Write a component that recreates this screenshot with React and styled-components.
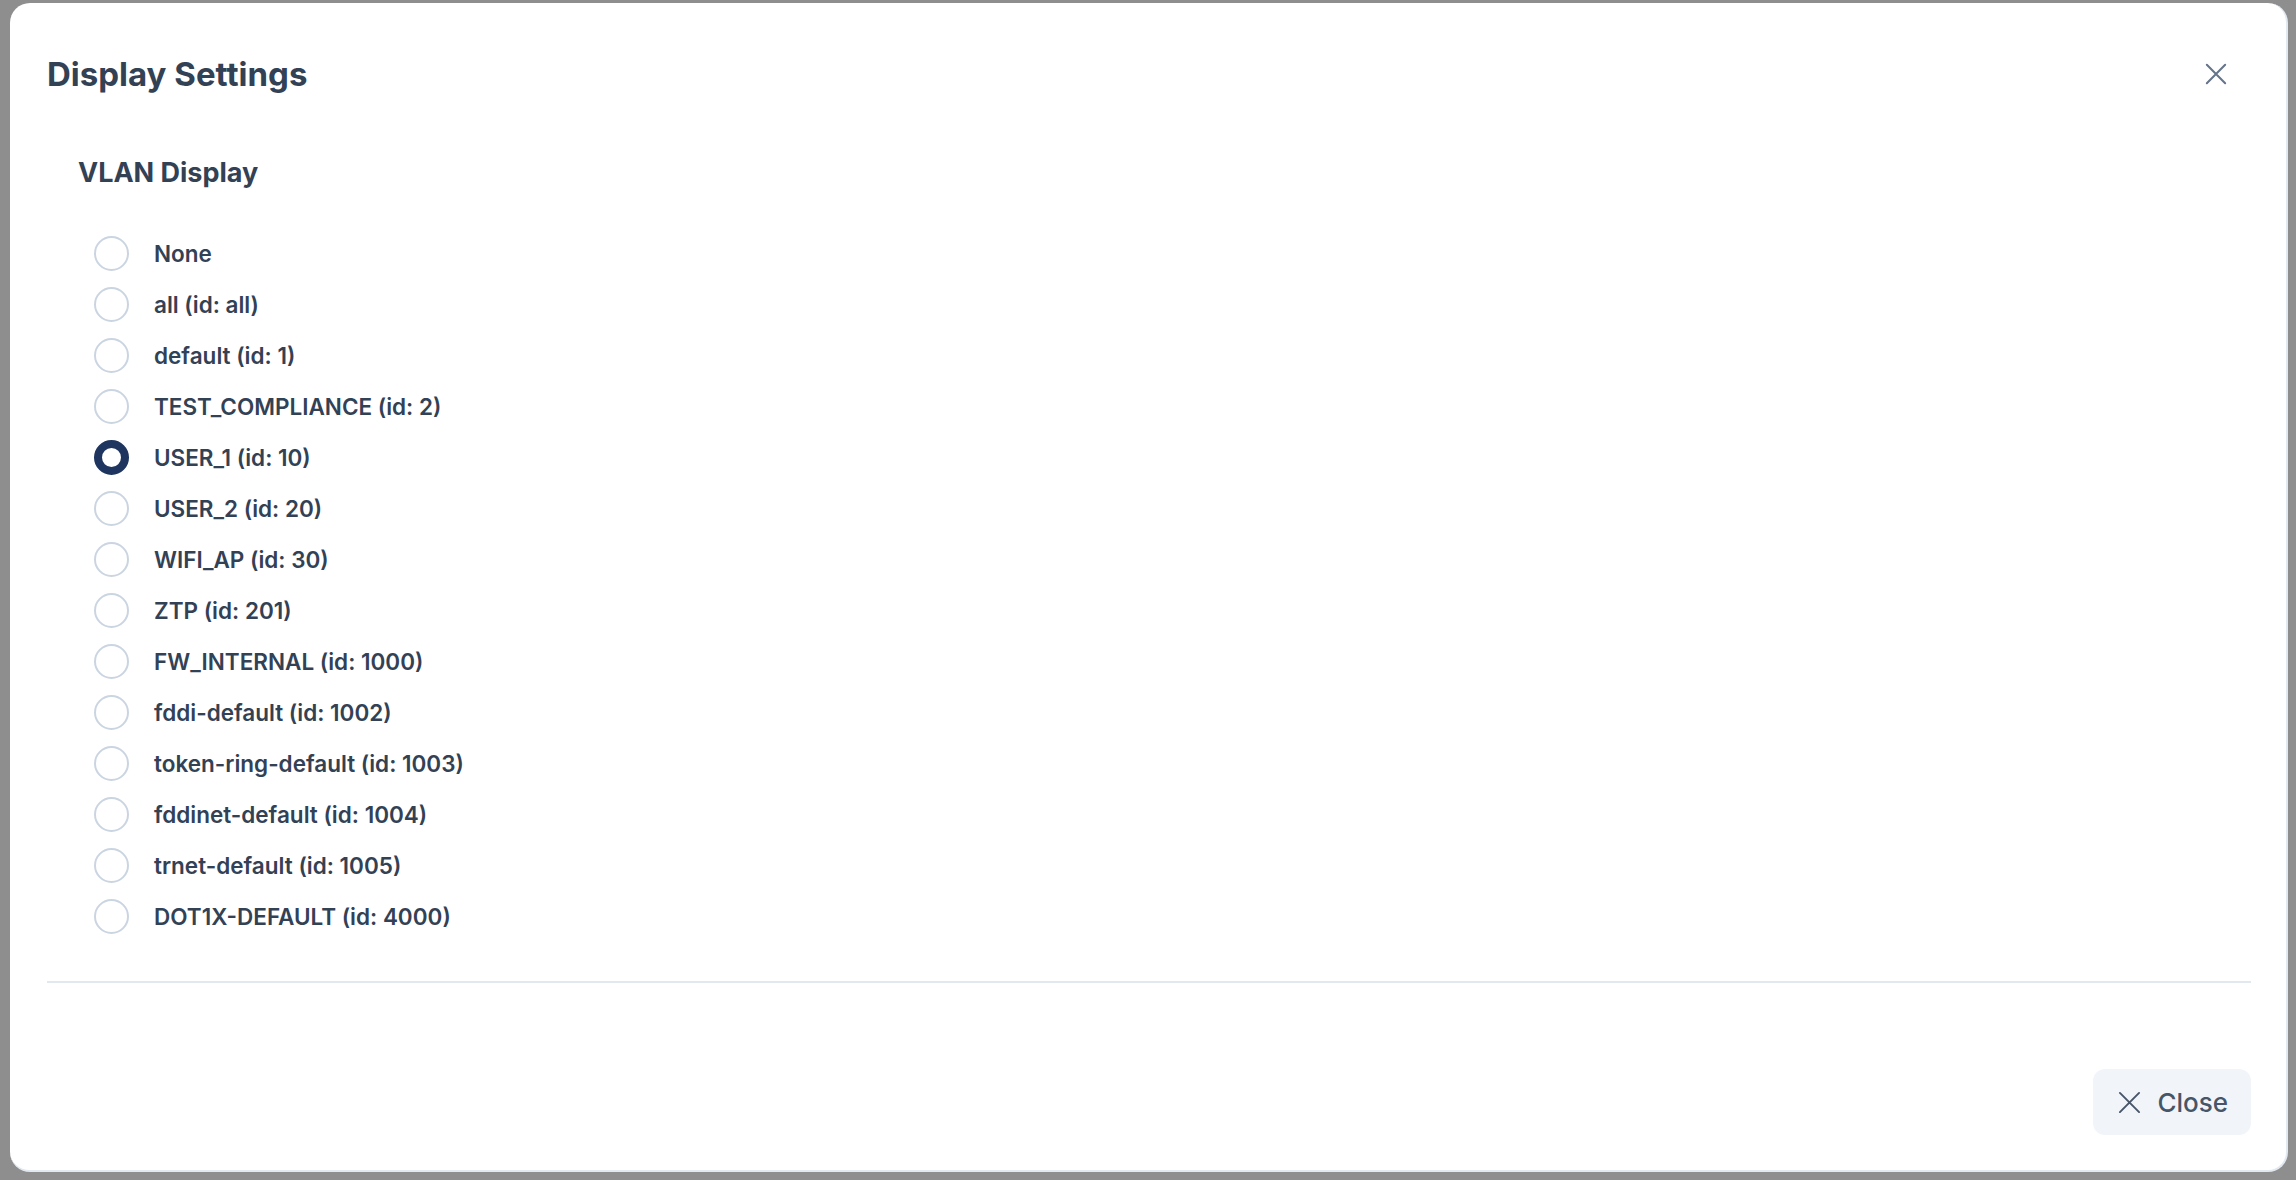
import { useState } from "react";
import styled, { createGlobalStyle } from "styled-components";

const GlobalStyle = createGlobalStyle`
  html, body {
    margin: 0;
    padding: 0;
    background: #8e8e8e;
    font-family: "Inter", "Lato", "Noto Sans", sans-serif;
  }
  * {
    box-sizing: border-box;
  }
`;

const vlans = [
  { id: "none", label: "None" },
  { id: "all", label: "all (id: all)" },
  { id: "1", label: "default (id: 1)" },
  { id: "2", label: "TEST_COMPLIANCE (id: 2)" },
  { id: "10", label: "USER_1 (id: 10)" },
  { id: "20", label: "USER_2 (id: 20)" },
  { id: "30", label: "WIFI_AP (id: 30)" },
  { id: "201", label: "ZTP (id: 201)" },
  { id: "1000", label: "FW_INTERNAL (id: 1000)" },
  { id: "1002", label: "fddi-default (id: 1002)" },
  { id: "1003", label: "token-ring-default (id: 1003)" },
  { id: "1004", label: "fddinet-default (id: 1004)" },
  { id: "1005", label: "trnet-default (id: 1005)" },
  { id: "4000", label: "DOT1X-DEFAULT (id: 4000)" },
];

const CloseIcon = ({ size = 24, stroke = 2 }) => (
  <svg
    width={size}
    height={size}
    viewBox="0 0 24 24"
    fill="none"
    stroke="currentColor"
    strokeWidth={stroke}
    strokeLinecap="round"
  >
    <path d="M2 2l20 20M22 2L2 22" />
  </svg>
);

const App = () => {
  const [selected, setSelected] = useState("10");

  return (
    <>
      <GlobalStyle />
      <Backdrop>
        <Modal>
          <Header>
            <Title>Display Settings</Title>
            <IconButton aria-label="Close">
              <CloseIcon size={22} stroke={2.2} />
            </IconButton>
          </Header>
          <Body>
            <SectionTitle>VLAN Display</SectionTitle>
            <RadioList>
              {vlans.map((v) => (
                <RadioRow key={v.id} onClick={() => setSelected(v.id)}>
                  <Radio checked={selected === v.id} />
                  <RadioLabel>{v.label}</RadioLabel>
                </RadioRow>
              ))}
            </RadioList>
          </Body>
          <Divider />
          <Footer>
            <FooterButton>
              <CloseIcon size={23} stroke={2} />
              Close
            </FooterButton>
          </Footer>
        </Modal>
      </Backdrop>
    </>
  );
};

export default App;

const Backdrop = styled.div`
  height: 1180px;
  padding: 3px 8px 8px 10px;
  display: flex;
`;

const Modal = styled.div`
  flex: 1;
  display: flex;
  flex-direction: column;
  background: #ffffff;
  border-radius: 20px;
  border-right: 2px solid #e2e8f0;
  border-bottom: 2px solid #e2e8f0;
  padding: 0 35px 0 37px;
`;

const Header = styled.div`
  display: flex;
  align-items: flex-start;
  justify-content: space-between;
  height: 153px;
  padding-top: 51px;
`;

const Title = styled.h2`
  margin: 0;
  font-size: 33px;
  font-weight: 700;
  line-height: 40px;
  color: #334155;
`;

const IconButton = styled.button`
  border: none;
  background: none;
  padding: 0;
  margin: 9px 24px 0 0;
  color: #64748b;
  display: flex;
  cursor: pointer;
`;

const Body = styled.div`
  padding-left: 31px;
`;

const SectionTitle = styled.h3`
  margin: 0 0 46px;
  font-size: 27px;
  font-weight: 700;
  line-height: 34px;
  color: #334155;
`;

const RadioList = styled.div`
  display: flex;
  flex-direction: column;
  gap: 17px;
  padding-left: 16px;
`;

const RadioRow = styled.label`
  display: flex;
  align-items: center;
  gap: 25px;
  height: 34px;
  cursor: pointer;
`;

const Radio = styled.span`
  width: 35px;
  height: 35px;
  flex-shrink: 0;
  border-radius: 50%;
  border: ${({ checked }) =>
    checked ? "8px solid #1e3560" : "2px solid #cbd5e1"};
  background: #ffffff;
`;

const RadioLabel = styled.span`
  font-size: 22.5px;
  font-weight: 600;
  color: #334155;
`;

const Divider = styled.hr`
  margin: 48px 0 0;
  border: none;
  border-top: 2px solid #e2e8f0;
`;

const Footer = styled.div`
  flex: 1;
  display: flex;
  justify-content: flex-end;
  align-items: flex-end;
  padding-bottom: 35px;
`;

const FooterButton = styled.button`
  display: flex;
  align-items: center;
  gap: 16px;
  height: 66px;
  padding: 0 23px 0 25px;
  border: none;
  border-radius: 12px;
  background: #f1f5f9;
  color: #475569;
  font-family: "Inter", "Lato", sans-serif;
  font-size: 26px;
  font-weight: 500;
  cursor: pointer;
`;
